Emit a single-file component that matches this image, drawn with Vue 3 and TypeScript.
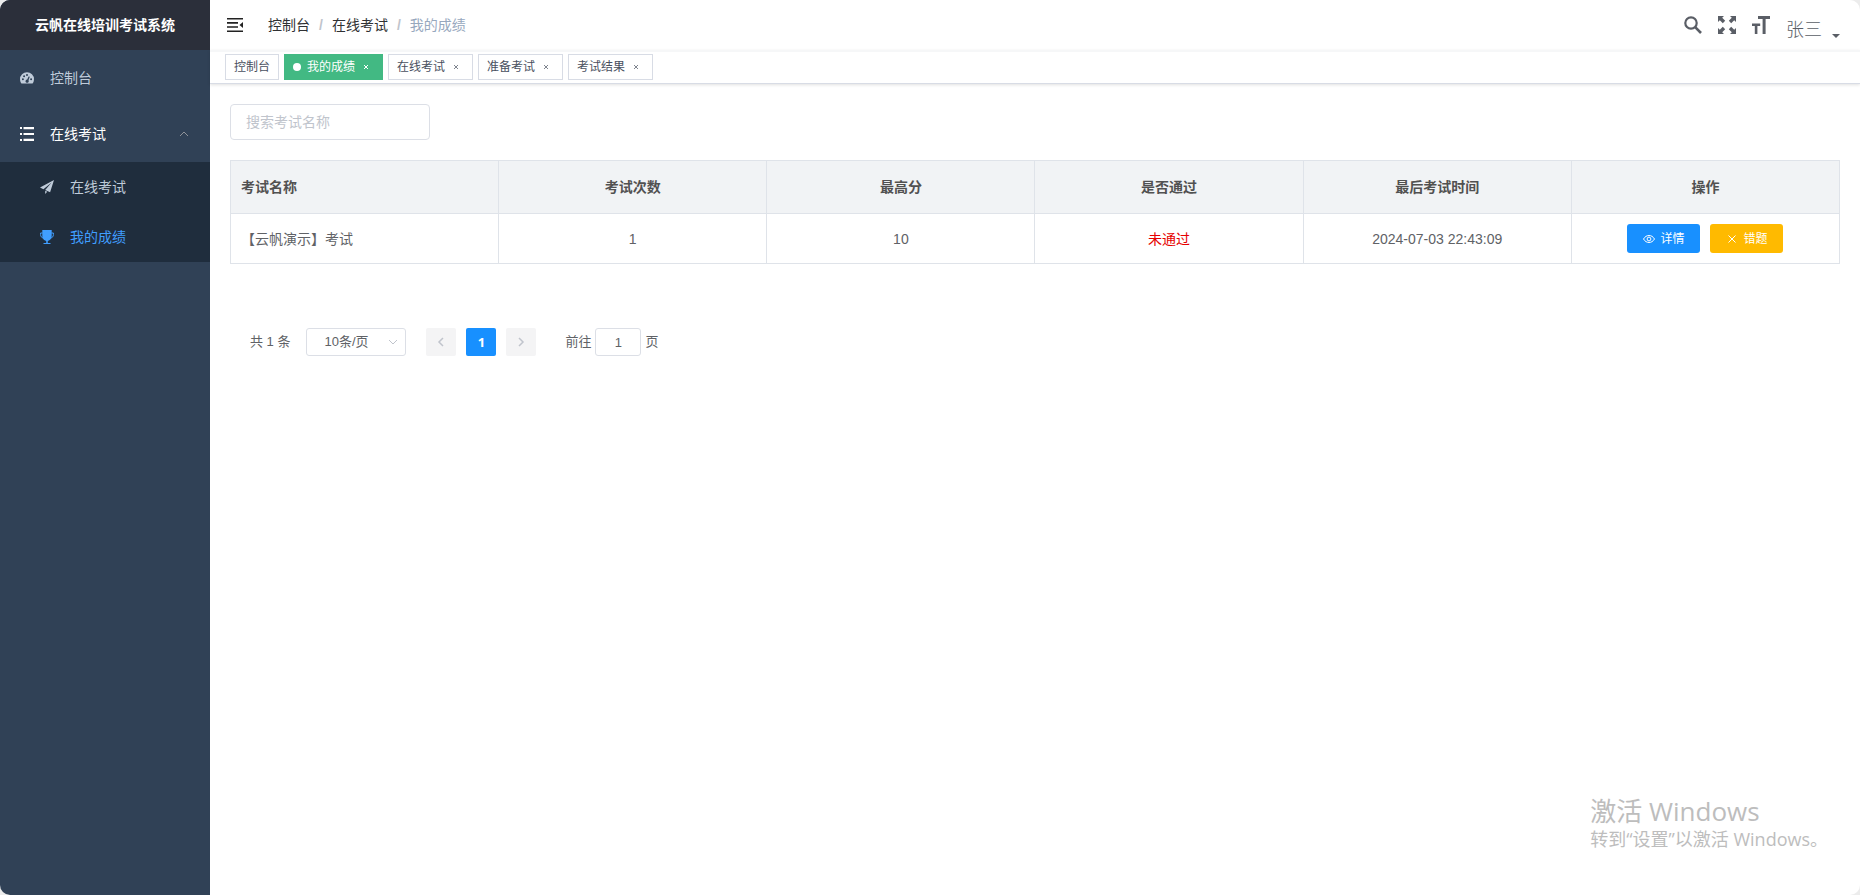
<script setup lang="ts">
import { ref } from 'vue'

interface Tag {
  title: string
  active: boolean
  closable: boolean
}

interface ExamRow {
  title: string
  tryCount: number
  maxScore: number
  passed: boolean
  updateTime: string
}

const tags = ref<Tag[]>([
  { title: '控制台', active: false, closable: false },
  { title: '我的成绩', active: true, closable: true },
  { title: '在线考试', active: false, closable: true },
  { title: '准备考试', active: false, closable: true },
  { title: '考试结果', active: false, closable: true },
])

const columns: string[] = ['考试名称', '考试次数', '最高分', '是否通过', '最后考试时间', '操作']

const rows = ref<ExamRow[]>([
  { title: '【云帆演示】考试', tryCount: 1, maxScore: 10, passed: false, updateTime: '2024-07-03 22:43:09' },
])

const keyword = ref('')
const pageSize = ref(10)
const jumpTo = ref('1')

function closeTag(index: number) {
  tags.value.splice(index, 1)
}
</script>

<template>
  <div class="app">
    <aside class="sidebar">
      <h1 class="logo">云帆在线培训考试系统</h1>
      <nav class="menu">
        <a class="item" href="#dashboard">
          <svg class="icon" viewBox="0 0 14 14" aria-hidden="true">
            <path fill-rule="evenodd" fill="currentColor" d="M7 1.200a7 7 0 0 0-7 7c0 1.300.4 2.600 1 3.700.1.300.3.500.6.500h10.800c.3 0 .5-.2.600-.5.600-1.100 1-2.400 1-3.700a7 7 0 0 0-7-7zM2.900 9.200a1 1 0 1 1 0-2 1 1 0 0 1 0 2zM4.100 6.200a1 1 0 1 1 0-2 1 1 0 0 1 0 2zM7 4.900a1 1 0 1 1 0-2 1 1 0 0 1 0 2zM8.500 5.800c.1-.3.500-.4.800-.300.3.1.4.400.3.700L8.500 9.300c.3.400.4 1.100.1 1.600-.5.900-1.700 1.100-2.500.5-.8-.700-.8-1.900.1-2.500.3-.2.700-.3 1-.300zM11.100 9.200a1 1 0 1 1 0-2 1 1 0 0 1 0 2z" />
          </svg>
          <span>控制台</span>
        </a>
        <button class="item open" type="button" aria-expanded="true">
          <svg class="icon" viewBox="0 0 14 14" aria-hidden="true">
            <path fill="currentColor" d="M0 0h2v2H0zM3.500 0H14v2.200H3.500zM0 6h2v2H0zM3.500 5.900H14v2.200H3.500zM0 12h2v2H0zM3.500 11.800H14V14H3.500z" />
          </svg>
          <span>在线考试</span>
          <svg class="arrow" viewBox="0 0 12 12" aria-hidden="true">
            <path d="M2 8l4-4 4 4" fill="none" stroke="currentColor" stroke-width="1" />
          </svg>
        </button>
        <div class="submenu">
          <a class="item sub" href="#exam">
            <svg class="icon" viewBox="0 0 14 14" aria-hidden="true">
              <path fill="currentColor" d="M14 0L0 7.600l3.400 1.700L11.600 2.400 5.200 10.100l4.900 2.200zM5.200 10.800V14l2-2.300z" />
            </svg>
            <span>在线考试</span>
          </a>
          <a class="item sub current" href="#my-exam" aria-current="page">
            <svg class="icon" viewBox="0 0 14 14" aria-hidden="true">
              <path fill="currentColor" d="M2.300 0h9.400v6c0 2.600-1.600 4.400-3.900 4.900v2h2.700V14h-7v-1.100h2.700v-2C3.900 10.400 2.300 8.600 2.300 6z" />
              <path fill="none" stroke="currentColor" stroke-width="1" d="M2.600 3H.6v1.500c0 2 1 3.200 2.600 3.500M11.400 3h2v1.500c0 2-1 3.200-2.600 3.500" />
            </svg>
            <span>我的成绩</span>
          </a>
        </div>
      </nav>
    </aside>

    <div class="main">
      <header class="navbar">
        <button class="plain" type="button" aria-label="折叠菜单">
          <svg class="hamburger" viewBox="0 0 16 14" aria-hidden="true">
            <path fill="currentColor" d="M0 0h16v1.600H0zM0 4.100h11v1.600H0zM0 8.200h11v1.600H0zM0 12.400h16V14H0zM16 4v6l-3.500-3z" />
          </svg>
        </button>
        <nav class="breadcrumb" aria-label="当前位置">
          <a href="#dashboard">控制台</a>
          <span class="slash">/</span>
          <a href="#exam">在线考试</a>
          <span class="slash">/</span>
          <span class="here">我的成绩</span>
        </nav>
        <div class="tools">
          <button class="plain" type="button" aria-label="搜索">
            <svg class="tool" viewBox="0 0 18 18" aria-hidden="true">
              <circle cx="7" cy="7" r="5.700" fill="none" stroke="currentColor" stroke-width="2.200" />
              <path d="M11.200 11.200L17 17" stroke="currentColor" stroke-width="2.600" />
            </svg>
          </button>
          <button class="plain" type="button" aria-label="全屏">
            <svg class="tool" viewBox="0 0 18 18" aria-hidden="true">
              <path fill="currentColor" d="M0 0h6L4.200 1.800l3 3-2.400 2.400-3-3L0 6zM18 0v6l-1.800-1.800-3 3-2.400-2.400 3-3L12 0zM0 18v-6l1.800 1.800 3-3 2.400 2.400-3 3L6 18zM18 18h-6l1.800-1.800-3-3 2.400-2.400 3 3L18 12z" />
            </svg>
          </button>
          <button class="plain" type="button" aria-label="字号">
            <svg class="tool" viewBox="0 0 18 18" aria-hidden="true">
              <path fill="currentColor" d="M6 0h12v3h-4.400v15h-3V3H6zM0 7.500h8.200v2.600H5.400V18H2.800v-7.900H0z" />
            </svg>
          </button>
          <button class="plain user" type="button">
            <span>张三</span>
            <svg class="caret" viewBox="0 0 8 4" aria-hidden="true"><path fill="currentColor" d="M0 0h8L4 4z" /></svg>
          </button>
        </div>
      </header>

      <div class="tags">
        <div v-for="(tag, i) in tags" :key="tag.title" class="tag" :class="{ active: tag.active }">
          <a href="#tag">{{ tag.title }}</a>
          <button v-if="tag.closable" class="plain close" type="button" :aria-label="'关闭' + tag.title" @click="closeTag(i)">
            <svg viewBox="0 0 6 6" aria-hidden="true"><path d="M1 1l4 4M5 1L1 5" stroke="currentColor" stroke-width="1" /></svg>
          </button>
        </div>
      </div>

      <main class="content">
        <input v-model="keyword" class="search" type="text" placeholder="搜索考试名称" aria-label="搜索考试名称" />

        <table class="grid">
          <thead>
            <tr>
              <th v-for="name in columns" :key="name" scope="col">{{ name }}</th>
            </tr>
          </thead>
          <tbody>
            <tr v-for="row in rows" :key="row.title">
              <td>{{ row.title }}</td>
              <td>{{ row.tryCount }}</td>
              <td>{{ row.maxScore }}</td>
              <td :class="{ failed: !row.passed }">{{ row.passed ? '通过' : '未通过' }}</td>
              <td>{{ row.updateTime }}</td>
              <td>
                <div class="actions">
                  <button class="btn primary" type="button">
                    <svg viewBox="0 0 12 12" aria-hidden="true">
                      <path d="M.5 6C2 3.600 3.800 2.500 6 2.500S10 3.600 11.500 6C10 8.400 8.200 9.500 6 9.500S2 8.400.5 6z" fill="none" stroke="currentColor" stroke-width="1" />
                      <circle cx="6" cy="6" r="1.900" fill="none" stroke="currentColor" stroke-width="1" />
                    </svg>
                    <span>详情</span>
                  </button>
                  <button class="btn warning" type="button">
                    <svg viewBox="0 0 12 12" aria-hidden="true">
                      <path d="M2.500 2.500l7 7M9.500 2.500l-7 7" stroke="currentColor" stroke-width="1" />
                    </svg>
                    <span>错题</span>
                  </button>
                </div>
              </td>
            </tr>
          </tbody>
        </table>

        <div class="pagination">
          <span class="total">共 {{ rows.length }} 条</span>
          <div class="size">
            <select v-model="pageSize" aria-label="每页条数">
              <option :value="10">10条/页</option>
              <option :value="20">20条/页</option>
              <option :value="50">50条/页</option>
            </select>
            <svg viewBox="0 0 12 12" aria-hidden="true"><path d="M2 4l4 4 4-4" fill="none" stroke="currentColor" stroke-width="1" /></svg>
          </div>
          <div class="pager">
            <button type="button" disabled aria-label="上一页">
              <svg viewBox="0 0 12 12" aria-hidden="true"><path d="M8 2L4 6l4 4" fill="none" stroke="currentColor" stroke-width="1.500" /></svg>
            </button>
            <button class="on" type="button" aria-current="page">1</button>
            <button type="button" disabled aria-label="下一页">
              <svg viewBox="0 0 12 12" aria-hidden="true"><path d="M4 2l4 4-4 4" fill="none" stroke="currentColor" stroke-width="1.500" /></svg>
            </button>
          </div>
          <label class="jump">
            <span>前往</span>
            <input v-model="jumpTo" type="text" />
            <span>页</span>
          </label>
        </div>
      </main>
    </div>

    <div class="watermark">
      <p class="big">激活 Windows</p>
      <p class="small">转到“设置”以激活 Windows。</p>
    </div>
  </div>
</template>

<style>
body {
  margin: 0;
  background: #ececec;
}
</style>

<style scoped>
.app {
  position: relative;
  display: flex;
  min-height: 100vh;
  border-radius: 10px;
  overflow: hidden;
  background: #fff;
  color: #606266;
  font-family: "Liberation Sans", "Noto Sans CJK SC", sans-serif;
  font-size: 14px;
  line-height: 20px;
}

.app *,
.app *::before {
  box-sizing: border-box;
}

a {
  color: inherit;
  text-decoration: none;
}

button,
input,
select {
  font: inherit;
  color: inherit;
  margin: 0;
}

button {
  cursor: pointer;
}

svg {
  display: block;
  flex: none;
}

.plain {
  display: flex;
  align-items: center;
  padding: 0;
  border: 0;
  background: none;
}

/* Sidebar */
.sidebar {
  flex: none;
  width: 210px;
  background: #304156;
}

.logo {
  margin: 0;
  background: #2b2f3a;
  color: #fff;
  font-size: 14px;
  font-weight: bold;
  line-height: 50px;
  text-align: center;
}

.item {
  display: flex;
  align-items: center;
  gap: 16px;
  width: 100%;
  height: 56px;
  padding: 0 20px;
  border: 0;
  background: none;
  color: #bfcbd9;
}

.item.open {
  color: #fff;
}

.icon {
  width: 14px;
  height: 14px;
}

.arrow {
  width: 12px;
  height: 12px;
  margin-left: auto;
  color: #909399;
}

.submenu {
  background: #1f2d3d;
}

.item.sub {
  height: 50px;
  padding-left: 40px;
}

.item.current {
  color: #409eff;
}

/* Top bar */
.main {
  flex: 1;
  min-width: 0;
}

.navbar {
  display: flex;
  align-items: center;
  height: 50px;
  padding: 0 20px 0 17px;
}

.hamburger {
  width: 16px;
  height: 14px;
  color: #222;
}

.breadcrumb {
  display: flex;
  margin-left: 25px;
  color: #303133;
}

.slash {
  margin: 0 9px;
  color: #c0c4cc;
  font-weight: bold;
}

.here {
  color: #97a8be;
}

.tools {
  display: flex;
  align-items: center;
  gap: 16px;
  margin-left: auto;
  color: #5a5e66;
}

.tool {
  width: 18px;
  height: 18px;
}

.user {
  align-items: flex-end;
  gap: 10px;
  padding-top: 10px;
  font-size: 18px;
  font-weight: 300;
  line-height: 20px;
}

.caret {
  width: 8px;
  height: 4px;
  margin-bottom: 2px;
}

/* Visited pages */
.tags {
  display: flex;
  align-items: flex-start;
  gap: 5px;
  height: 34px;
  padding: 2px 15px 0;
  border-top: 2px solid #f6f7f8;
  border-bottom: 1px solid #d8dce5;
  background: #fff;
  box-shadow: 0 1px 3px rgba(0, 0, 0, 0.12);
}

.tag {
  display: flex;
  align-items: center;
  height: 26px;
  padding: 0 8px;
  border: 1px solid #d8dce5;
  color: #495060;
  font-size: 12px;
}

.tag.active {
  border-color: #42b983;
  background: #42b983;
  color: #fff;
}

.tag.active::before {
  content: "";
  width: 8px;
  height: 8px;
  margin-right: 6px;
  border-radius: 50%;
  background: #fff;
}

.close {
  justify-content: center;
  width: 16px;
  height: 16px;
  margin-left: 3px;
  color: #80858f;
}

.tag.active .close {
  color: #fff;
}

.close svg {
  width: 6px;
  height: 6px;
}

/* Content */
.content {
  padding: 20px;
}

.search {
  display: block;
  width: 200px;
  height: 36px;
  padding: 0 15px;
  border: 1px solid #dcdfe6;
  border-radius: 4px;
  background: #fff;
}

.search::placeholder {
  color: #c0c4cc;
  opacity: 1;
}

.grid {
  width: 100%;
  margin-top: 20px;
  border: solid #dfe3e9;
  border-width: 1px 0 0 1px;
  border-collapse: separate;
  border-spacing: 0;
  table-layout: fixed;
}

.grid th,
.grid td {
  padding: 0 10px;
  border: solid #dfe3e9;
  border-width: 0 1px 1px 0;
  text-align: center;
}

.grid th {
  height: 53px;
  background: #f1f3f5;
  color: #515151;
}

.grid td {
  height: 50px;
}

.grid th:first-child,
.grid td:first-child {
  text-align: left;
}

.grid .failed {
  color: #e60000;
}

.actions {
  display: flex;
  justify-content: center;
  gap: 10px;
}

.btn {
  display: flex;
  align-items: center;
  gap: 5px;
  height: 29px;
  padding: 0 16px;
  border: 0;
  border-radius: 3px;
  color: #fff;
  font-size: 12px;
}

.btn svg {
  width: 12px;
  height: 12px;
}

.primary {
  background: #1890ff;
}

.warning {
  background: #ffba00;
}

/* Pagination */
.pagination {
  display: flex;
  align-items: center;
  margin-top: 64px;
  padding: 0 20px;
  font-size: 13px;
}

.size {
  position: relative;
  margin-left: 16px;
}

.size select {
  display: block;
  width: 100px;
  height: 28px;
  padding: 0 26px 0 6px;
  border: 1px solid #dcdfe6;
  border-radius: 3px;
  appearance: none;
  background: #fff;
  text-align: center;
}

.size svg {
  position: absolute;
  top: 8px;
  right: 7px;
  width: 12px;
  height: 12px;
  color: #c0c4cc;
  pointer-events: none;
}

.pager {
  display: flex;
  gap: 10px;
  margin-left: 20px;
}

.pager button {
  display: flex;
  align-items: center;
  justify-content: center;
  width: 30px;
  height: 28px;
  padding: 0;
  border: 0;
  border-radius: 2px;
  background: #f4f4f5;
  color: #c0c4cc;
}

.pager .on {
  background: #1890ff;
  color: #fff;
  font-family: "Open Sans", sans-serif;
  font-weight: bold;
}

.pager svg {
  width: 12px;
  height: 12px;
}

.jump {
  display: flex;
  align-items: center;
  gap: 4px;
  margin-left: 29px;
}

.jump input {
  width: 46px;
  height: 28px;
  padding: 0 3px;
  border: 1px solid #dcdfe6;
  border-radius: 3px;
  background: #fff;
  text-align: center;
}

/* System notice floating over the page */
.watermark {
  position: absolute;
  right: 32px;
  bottom: 44px;
  color: #bdbdbd;
  font-family: "Open Sans", "Noto Sans CJK SC", sans-serif;
  pointer-events: none;
}

.watermark p {
  margin: 0;
}

.big {
  font-size: 26px;
  line-height: 32px;
}

.small {
  font-size: 18px;
  line-height: 24px;
}
</style>
